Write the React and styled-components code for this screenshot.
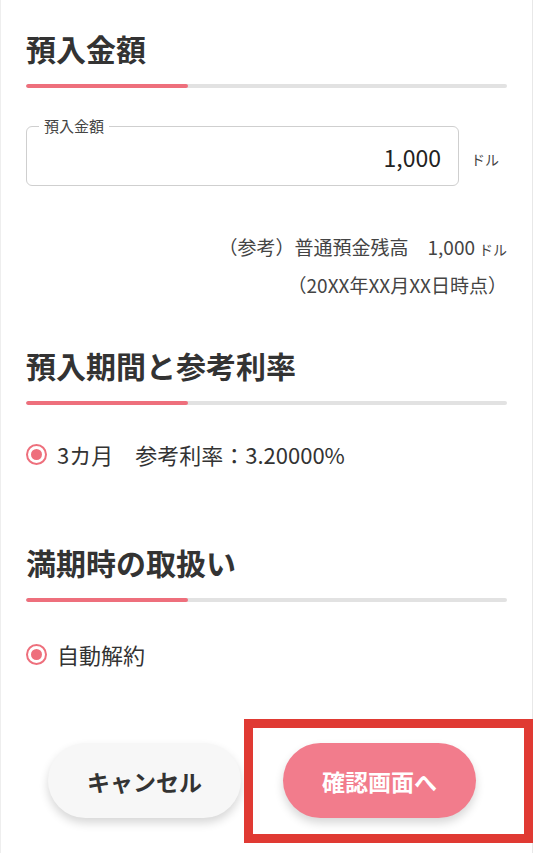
import React from 'react';
import styled, { createGlobalStyle } from 'styled-components';

const GlobalStyle = createGlobalStyle`
  * {
    box-sizing: border-box;
  }
  body {
    margin: 0;
    background: #fff;
    font-family: 'Noto Sans CJK JP', 'Noto Sans', sans-serif;
    color: #333;
  }
`;

const Page = styled.div`
  width: 533px;
  min-height: 853px;
  padding: 28px 25px 0 25px;
  border-left: 1px solid #eee;
  border-right: 1px solid #e8e8e8;
`;

const Heading = styled.h2`
  margin: ${(p) => p.$top || 0}px 0 0;
  font-size: 30px;
  line-height: 40px;
  font-weight: 700;
  color: #333;
`;

const Bar = styled.div`
  margin-top: 16px;
  height: 4px;
  border-radius: 2px;
  background: #e2e2e2;
  overflow: hidden;

  span {
    display: block;
    width: 162px;
    height: 100%;
    border-radius: 2px;
    background: #ee6f7c;
  }
`;

const InputRow = styled.div`
  margin-top: 38px;
  display: flex;
  align-items: center;
  gap: 12px;
`;

const Field = styled.fieldset`
  margin: 0;
  width: 433px;
  height: 60px;
  padding: 0 17px 0 16px;
  border: 1px solid #cfcfcf;
  border-radius: 6px;
  position: relative;
  display: flex;
  align-items: center;
  justify-content: flex-end;

  legend {
    position: absolute;
    top: -10px;
    left: 12px;
    padding: 0 5px;
    background: #fff;
    font-size: 15px;
    line-height: 18px;
    color: #444;
  }
`;

const Value = styled.span`
  font-size: 23px;
  color: #222;
  margin-top: 2px;
`;

const Unit = styled.span`
  font-size: 14px;
  color: #444;
  padding-top: 6px;
`;

const Note = styled.div`
  margin-top: 43px;
  text-align: right;
  font-size: 19px;
  line-height: 35px;
  color: #444;

  small {
    font-size: 14px;
    margin-left: 4px;
  }
`;

const RadioRow = styled.label`
  margin-top: ${(p) => p.$top}px;
  display: flex;
  align-items: center;
  gap: 10px;
  font-size: 22px;
  line-height: 30px;
  color: #333;
`;

const RadioDot = styled.span`
  flex-shrink: 0;
  width: 21px;
  height: 21px;
  border-radius: 50%;
  border: 2px solid #ee6f7c;
  display: flex;
  align-items: center;
  justify-content: center;

  &::after {
    content: '';
    width: 11px;
    height: 11px;
    border-radius: 50%;
    background: #ee6f7c;
  }
`;

const ButtonRow = styled.div`
  margin: 50px -25px 0 0;
  display: flex;
  align-items: flex-start;
  padding-left: 22px;
`;

const Button = styled.button`
  flex-shrink: 0;
  width: 193px;
  height: 75px;
  margin-top: 24px;
  border: none;
  border-radius: 38px;
  font-family: 'Noto Sans CJK JP', 'Noto Sans', sans-serif;
  font-size: 23px;
  font-weight: 700;
  color: ${(p) => (p.$primary ? '#fff' : '#333')};
  background: ${(p) => (p.$primary ? '#f27c8c' : '#f7f7f7')};
  box-shadow: 0 5px 10px rgba(0, 0, 0, 0.16);
`;

const Highlight = styled.div`
  flex-shrink: 0;
  margin-left: 3px;
  width: 289px;
  height: 124px;
  border: 9px solid #e03a33;
  padding: 15px 0 0 30px;

  ${Button} {
    margin-top: 0;
  }
`;

export default function App() {
  return (
    <>
      <GlobalStyle />
      <Page>
        <Heading>預入金額</Heading>
        <Bar>
          <span />
        </Bar>
        <InputRow>
          <Field>
            <legend>預入金額</legend>
            <Value>1,000</Value>
          </Field>
          <Unit>ドル</Unit>
        </InputRow>
        <Note>
          <div>
            （参考）普通預金残高　1,000<small>ドル</small>
          </div>
          <div>（20XX年XX月XX日時点）</div>
        </Note>

        <Heading $top={43}>預入期間と参考利率</Heading>
        <Bar>
          <span />
        </Bar>
        <RadioRow $top={34}>
          <RadioDot />
          3カ月　参考利率：3.20000%
        </RadioRow>

        <Heading $top={73}>満期時の取扱い</Heading>
        <Bar>
          <span />
        </Bar>
        <RadioRow $top={37}>
          <RadioDot />
          自動解約
        </RadioRow>

        <ButtonRow>
          <Button>キャンセル</Button>
          <Highlight>
            <Button $primary>確認画面へ</Button>
          </Highlight>
        </ButtonRow>
      </Page>
    </>
  );
}
